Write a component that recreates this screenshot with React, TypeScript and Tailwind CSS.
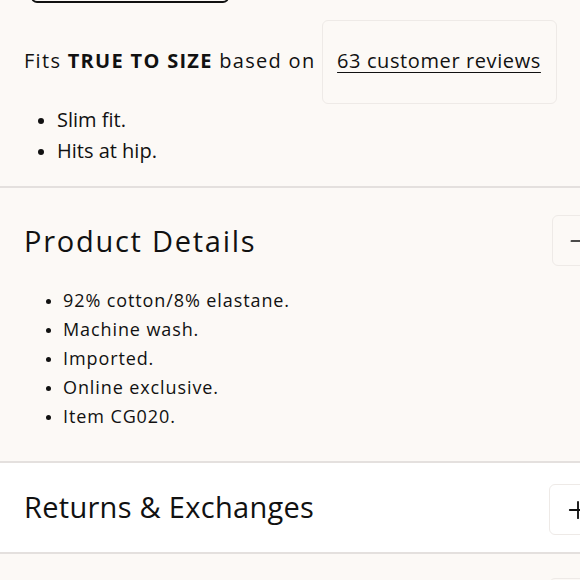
import { Minus, Plus } from "lucide-react";

const details = [
  "92% cotton/8% elastane.",
  "Machine wash.",
  "Imported.",
  "Online exclusive.",
  "Item CG020.",
];

export default function App() {
  return (
    <div
      className="w-[580px] h-[580px] overflow-hidden bg-[#fcf9f6] text-[#111]"
      style={{ fontFamily: "'Open Sans', Lato, sans-serif" }}
    >
      <div className="w-[630px]">
        {/* fit section */}
        <section className="px-6 pb-5">
          <div className="-mt-[45px] ml-[7px] h-12 w-[198px] rounded-md border-2 border-[#111]" />
          <div className="mt-[17px] flex items-center">
            <p className="mb-[2px] text-[20px] leading-none tracking-[0.065em]">
              Fits <span className="font-bold">TRUE TO SIZE</span> based on
            </p>
            <div className="ml-[6px] flex h-[84px] w-[235px] items-center justify-center rounded-md border border-[#eeeae7]">
              <a className="mb-[2px] text-[20px] tracking-[0.03em] underline underline-offset-4 decoration-1">
                63 customer reviews
              </a>
            </div>
          </div>
          <ul className="list-disc pl-[33px] text-[20px] leading-[31px] marker:text-[17px]">
            <li>Slim fit.</li>
            <li>Hits at hip.</li>
          </ul>
        </section>

        <div className="h-[2px] bg-[#e4e0de]" />

        {/* product details */}
        <section className="px-6 pt-[27px] pb-[30px]">
          <div className="flex items-center justify-between">
            <h2 className="text-[29px] leading-none tracking-[0.06em]">Product Details</h2>
            <button className="flex h-[51px] w-[54px] items-center justify-center rounded-md border border-[#eeeae7]">
              <Minus size={26} strokeWidth={1.6} />
            </button>
          </div>
          <ul className="mt-5 list-disc pl-[39px] text-[18px] leading-[29px] tracking-[0.05em] marker:text-[14px]">
            {details.map((d) => (
              <li key={d}>{d}</li>
            ))}
          </ul>
        </section>

        <div className="h-[2px] bg-[#e4e0de]" />

        {/* returns */}
        <section className="bg-white px-6 pt-[21px] pb-[17px]">
          <div className="flex items-center justify-between">
            <h2 className="mb-[6px] text-[29px] leading-none tracking-[0.01em]">Returns &amp; Exchanges</h2>
            <button className="flex h-[51px] w-[57px] items-center justify-center rounded-md border border-[#eeeae7]">
              <Plus size={28} strokeWidth={1.6} />
            </button>
          </div>
        </section>

        <div className="h-[2px] bg-[#e4e0de]" />

        <section className="px-6 pt-6">
          <div className="flex justify-end">
            <button className="h-[51px] w-[57px] rounded-md border border-[#eeeae7]" />
          </div>
        </section>
      </div>
    </div>
  );
}
